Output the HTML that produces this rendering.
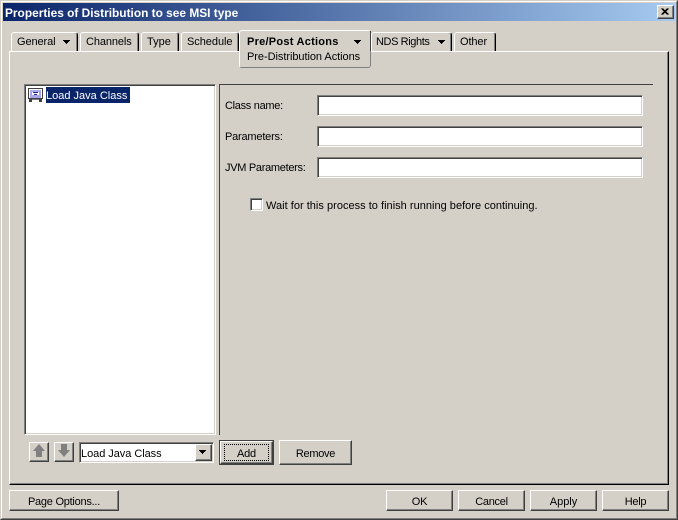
<!DOCTYPE html>
<html><head><meta charset="utf-8"><style>
html,body{margin:0;padding:0;background:#d4d0c8}
#w{position:relative;width:678px;height:520px;overflow:hidden;background:#d4d0c8;font:11px "Liberation Sans",sans-serif;color:#000}
#w div{position:absolute;box-sizing:border-box}
#w svg{position:absolute}
.t{white-space:nowrap;line-height:13px}
.btn{background:#d4d0c8;border:1px solid;border-color:#fff #404040 #404040 #fff;box-shadow:inset -1px -1px 0 #808080;text-align:center;line-height:22px;white-space:nowrap;letter-spacing:-.2px}
.tab{background:#d4d0c8;border-top:1px solid #fff;border-left:1px solid #fff;border-right:1px solid #000;box-shadow:inset -1px 0 0 #808080;border-radius:3px 3px 0 0;height:19px}
.fld{background:#fff;border:1px solid;border-color:#808080 #fff #fff #808080;box-shadow:inset 1px 1px 0 #404040,inset -1px -1px 0 #d4d0c8}
</style></head><body><div id="w">
<div style="left:0;top:0;width:678px;height:520px;border:1px solid;border-color:#d4d0c8 #404040 #404040 #d4d0c8"></div>
<div style="left:1px;top:1px;width:676px;height:518px;border:1px solid;border-color:#fff #808080 #808080 #fff"></div>
<div style="left:3px;top:3px;width:672px;height:18px;background:linear-gradient(90deg,#0a246a,#a6caf0)"></div>
<div class="t" style="left:5px;top:5px;color:#fff;font-weight:bold;font-size:11.9px;line-height:16px">Properties of Distribution to see MSI type</div>
<div class="btn" style="left:657px;top:5px;width:17px;height:14px"></div>
<svg style="left:657px;top:5px" width="17" height="14"><path d="M4.500 3.500L10.500 9.500M5.500 3.500L11.500 9.500M10.500 3.500L4.500 9.500M11.500 3.500L5.500 9.500" stroke="#000" stroke-width="1" fill="none"/></svg>

<!-- pane -->
<div style="left:9px;top:51px;width:660px;height:434px;border:1px solid;border-color:#fff #000 #000 #fff;box-shadow:inset -1px -1px 0 #808080"></div>

<!-- tabs -->
<div class="tab" style="left:11px;top:32px;width:67px"></div>
<div class="t" style="left:17px;top:36px;letter-spacing:-.1px">General</div>
<svg style="left:63px;top:40px" width="7" height="4" shape-rendering="crispEdges"><path d="M0 0h7v1h-1v1h-1v1h-1v1h-1v-1h-1v-1h-1v-1h-1z"/></svg>
<div class="tab" style="left:80px;top:32px;width:59px"></div>
<div class="t" style="left:86px;top:36px;letter-spacing:-.1px">Channels</div>
<div class="tab" style="left:141px;top:32px;width:38px"></div>
<div class="t" style="left:147px;top:36px">Type</div>
<div class="tab" style="left:181px;top:32px;width:58px"></div>
<div class="t" style="left:187px;top:36px;letter-spacing:-.05px">Schedule</div>
<div style="left:239px;top:30px;width:132px;height:38px;background:#d4d0c8;border:1px solid;border-color:#fff #808080 #808080 #fff;border-radius:3px"></div>
<div style="left:370px;top:31px;width:1px;height:20px;background:#404040"></div>
<div class="t" style="left:247px;top:36px;font-weight:bold;letter-spacing:.25px">Pre/Post Actions</div>
<svg style="left:354px;top:40px" width="7" height="4" shape-rendering="crispEdges"><path d="M0 0h7v1h-1v1h-1v1h-1v1h-1v-1h-1v-1h-1v-1h-1z"/></svg>
<div class="t" style="left:247px;top:51px;letter-spacing:-.05px">Pre-Distribution Actions</div>
<div class="tab" style="left:371px;top:32px;width:81px"></div>
<div class="t" style="left:376px;top:36px;letter-spacing:-.4px">NDS Rights</div>
<svg style="left:438px;top:40px" width="7" height="4" shape-rendering="crispEdges"><path d="M0 0h7v1h-1v1h-1v1h-1v1h-1v-1h-1v-1h-1v-1h-1z"/></svg>
<div class="tab" style="left:454px;top:32px;width:42px"></div>
<div class="t" style="left:460px;top:36px;letter-spacing:-.1px">Other</div>

<!-- tree -->
<div style="left:24px;top:84px;width:192px;height:351px;background:#fff;border:1px solid;border-color:#808080 #fff #fff #808080;box-shadow:inset 1px 1px 0 #404040,inset -1px -1px 0 #d4d0c8"></div>
<svg style="left:28px;top:88px" width="16" height="15" shape-rendering="crispEdges"><rect x=".5" y=".5" width="14" height="10" fill="#fff" stroke="#404040"/><rect x="2" y="2" width="11" height="8" fill="#a8a8e8"/><rect x="4" y="4" width="7" height="3" fill="#fff"/><path d="M5 4h5v1h-5zM6 6h3v1h-3z" fill="#202080"/><path d="M1 11h3v3h-3zM11 11h3v3h-3z" fill="#404040"/><path d="M4 11h7v1h-7z" fill="#808080"/></svg>
<div style="left:46px;top:87px;width:84px;height:16px;background:#0a246a"></div>
<div class="t" style="left:46px;top:90px;color:#fff">Load Java Class</div>

<!-- dividers -->
<div style="left:219px;top:84px;width:1px;height:351px;background:#404040"></div>
<div style="left:220px;top:84px;width:433px;height:1px;background:#404040"></div>

<!-- fields -->
<div class="t" style="left:225px;top:100px;letter-spacing:-.3px">Class name:</div>
<div class="fld" style="left:317px;top:95px;width:326px;height:21px"></div>
<div class="t" style="left:225px;top:131px;letter-spacing:-.2px">Parameters:</div>
<div class="fld" style="left:317px;top:126px;width:326px;height:21px"></div>
<div class="t" style="left:225px;top:162px;letter-spacing:-.3px">JVM Parameters:</div>
<div class="fld" style="left:317px;top:157px;width:326px;height:21px"></div>
<div class="fld" style="left:250px;top:198px;width:13px;height:13px"></div>
<div class="t" style="left:266px;top:200px;letter-spacing:.02px">Wait for this process to finish running before continuing.</div>

<!-- bottom row -->
<div class="btn" style="left:29px;top:442px;width:20px;height:20px"></div>
<svg style="left:29px;top:442px" width="20" height="20"><path d="M10 2L16 9H13V15H7V9H4Z" fill="#808080"/></svg>
<div class="btn" style="left:54px;top:442px;width:20px;height:20px"></div>
<svg style="left:54px;top:442px" width="20" height="20"><path d="M10 15L16 8H13V2H7V8H4Z" fill="#808080"/></svg>
<div class="fld" style="left:79px;top:442px;width:135px;height:21px"></div>
<div class="t" style="left:81px;top:448px;letter-spacing:-.05px">Load Java Class</div>
<div class="btn" style="left:195px;top:444px;width:17px;height:17px"></div>
<svg style="left:199px;top:450px" width="7" height="4" shape-rendering="crispEdges"><path d="M0 0h7v1h-1v1h-1v1h-1v1h-1v-1h-1v-1h-1v-1h-1z"/></svg>
<div style="left:219px;top:440px;width:55px;height:25px;border:1px solid #404040;background:#d4d0c8"></div>
<div class="btn" style="left:220px;top:441px;width:53px;height:23px;line-height:24px">Add</div>
<div style="left:224px;top:444px;width:45px;height:17px;border:1px dotted #000"></div>
<div class="btn" style="left:279px;top:440px;width:73px;height:25px;line-height:26px;letter-spacing:-.3px">Remove</div>

<div class="btn" style="left:9px;top:490px;width:110px;height:21px;letter-spacing:-.25px">Page Options...</div>
<div class="btn" style="left:386px;top:490px;width:67px;height:21px">OK</div>
<div class="btn" style="left:458px;top:490px;width:67px;height:21px;letter-spacing:-.3px">Cancel</div>
<div class="btn" style="left:530px;top:490px;width:67px;height:21px;letter-spacing:0">Apply</div>
<div class="btn" style="left:602px;top:490px;width:67px;height:21px;letter-spacing:-.3px">Help</div>
</div></body></html>
